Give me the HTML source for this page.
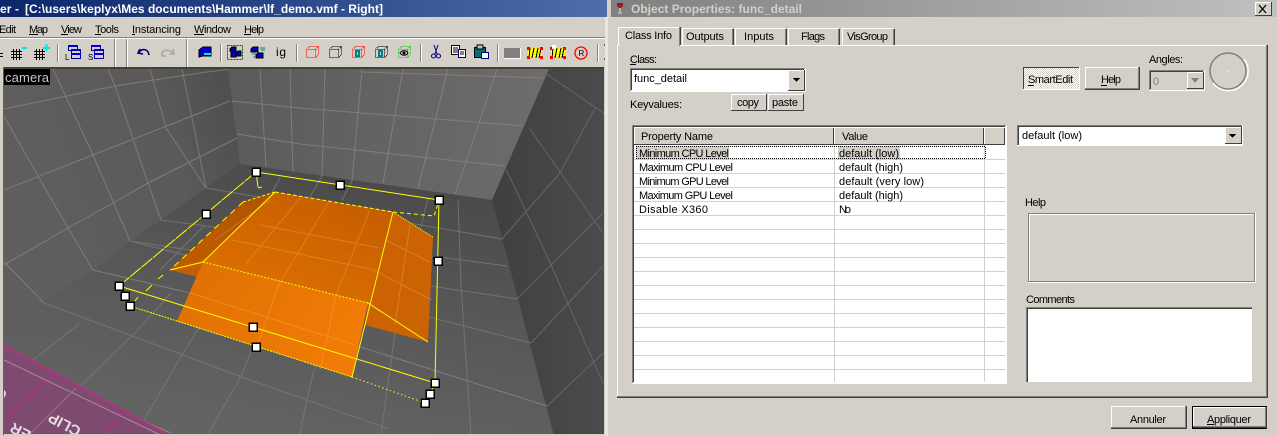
<!DOCTYPE html>
<html><head><meta charset="utf-8"><style>
html,body{margin:0;padding:0;background:#d4d0c8;width:1277px;height:436px;overflow:hidden}
svg{display:block}
text{font-family:"Liberation Sans",sans-serif;font-size:11px;fill:#000}
.ui{shape-rendering:crispEdges}
.w{stroke:#fff;fill:none}.k{stroke:#404040;fill:none}.g{stroke:#808080;fill:none}.b{stroke:#000;fill:none}
.y{stroke:#ff0;fill:none;stroke-width:1}
.h{fill:#fff;stroke:#000;stroke-width:1.5}
.lw{stroke:#8a8a88;fill:none;stroke-width:1;opacity:.7}
.ld{stroke:#7c7c7c;fill:none;stroke-width:1;opacity:.75}
.lr{stroke:#6c6c6c;fill:none;stroke-width:1;opacity:.85}
.lo{stroke:#ffc070;fill:none;stroke-width:1;opacity:.28}
</style></head><body>
<svg width="1277" height="436" viewBox="0 0 1277 436" xmlns="http://www.w3.org/2000/svg">
<defs>
<linearGradient id="t1" x1="0" x2="1" y1="0" y2="0"><stop offset="0" stop-color="#0b266b"/><stop offset="1" stop-color="#4d6ea9"/></linearGradient>
<linearGradient id="t2" x1="0" x2="1" y1="0" y2="0"><stop offset="0" stop-color="#808080"/><stop offset="1" stop-color="#c0c0c0"/></linearGradient>
<linearGradient id="lw" gradientUnits="userSpaceOnUse" x1="0" y1="200" x2="240" y2="120"><stop offset="0" stop-color="#605f5d"/><stop offset=".7" stop-color="#5b5a58"/><stop offset="1" stop-color="#4f4f4e"/></linearGradient>
<linearGradient id="bw" gradientUnits="userSpaceOnUse" x1="230" y1="120" x2="540" y2="120"><stop offset="0" stop-color="#5b5b59"/><stop offset="1" stop-color="#6d6c6a"/></linearGradient>
<linearGradient id="fl" gradientUnits="userSpaceOnUse" x1="330" y1="170" x2="280" y2="434"><stop offset="0" stop-color="#4a4a4a"/><stop offset=".4" stop-color="#565656"/><stop offset="1" stop-color="#636363"/></linearGradient>
<linearGradient id="rw" gradientUnits="userSpaceOnUse" x1="500" y1="300" x2="604" y2="300"><stop offset="0" stop-color="#404040"/><stop offset="1" stop-color="#4b4b4b"/></linearGradient>
<linearGradient id="ot" gradientUnits="userSpaceOnUse" x1="330" y1="195" x2="290" y2="300"><stop offset="0" stop-color="#c65f00"/><stop offset="1" stop-color="#dc6e02"/></linearGradient>
<linearGradient id="of" gradientUnits="userSpaceOnUse" x1="200" y1="280" x2="330" y2="370"><stop offset="0" stop-color="#e17203"/><stop offset="1" stop-color="#f17b06"/></linearGradient>
<linearGradient id="ol" gradientUnits="userSpaceOnUse" x1="260" y1="195" x2="190" y2="270"><stop offset="0" stop-color="#b05400"/><stop offset="1" stop-color="#c05c00"/></linearGradient>
<clipPath id="vp"><rect x="4" y="69" width="600" height="365"/></clipPath>
<clipPath id="pk"><polygon points="3,345 171,436 3,436"/></clipPath>
<pattern id="dith" width="2" height="2" patternUnits="userSpaceOnUse"><rect width="2" height="2" fill="#fff"/><rect width="1" height="1" fill="#d4d0c8"/><rect x="1" y="1" width="1" height="1" fill="#d4d0c8"/></pattern>
<pattern id="dot" width="2" height="2" patternUnits="userSpaceOnUse"><rect width="1" height="1" fill="#000"/><rect x="1" y="1" width="1" height="1" fill="#000"/></pattern>
</defs>

<rect width="1277" height="436" fill="#d4d0c8"/>

<!-- left titlebar -->
<rect class="ui" x="0" y="0" width="607" height="17" fill="url(#t1)"/>
<text x="0" y="13" textLength="19" style="font-weight:bold;font-size:12px;fill:#fff">er -</text>
<text x="25" y="13" textLength="358" style="font-weight:bold;font-size:12px;fill:#fff">[C:\users\keplyx\Mes documents\Hammer\lf_demo.vmf - Right]</text>

<!-- menu -->
<g>
<text x="-1" y="33" textLength="17">Edit</text>
<text x="29" y="33" textLength="19">Map</text>
<text x="61" y="33" textLength="21">View</text>
<text x="95" y="33" textLength="24">Tools</text>
<text x="132" y="33" textLength="49">Instancing</text>
<text x="194" y="33" textLength="37">Window</text>
<text x="244" y="33" textLength="20">Help</text>
</g>
<g class="ui" fill="#000">
<rect x="29" y="34" width="9" height="1"/><rect x="61" y="34" width="7" height="1"/><rect x="95" y="34" width="6" height="1"/><rect x="132" y="34" width="3" height="1"/><rect x="194" y="34" width="10" height="1"/><rect x="244" y="34" width="7" height="1"/>
</g>
<rect class="ui" x="0" y="37" width="607" height="1" fill="#808080"/>
<rect class="ui" x="0" y="38" width="607" height="1" fill="#fff"/>

<!-- toolbar -->
<g class="ui" fill="#808080">
<rect x="57" y="44" width="1" height="18"/><rect x="114" y="39" width="1" height="28"/><rect x="126" y="39" width="1" height="28"/>
<rect x="186" y="39" width="1" height="28"/><rect x="220" y="44" width="1" height="18"/><rect x="296" y="44" width="1" height="18"/>
<rect x="420" y="44" width="1" height="18"/><rect x="497" y="44" width="1" height="18"/><rect x="597" y="44" width="1" height="18"/>
</g>
<g class="ui" fill="#fff">
<rect x="58" y="44" width="1" height="18"/><rect x="115" y="39" width="1" height="28"/><rect x="127" y="39" width="1" height="28"/>
<rect x="187" y="39" width="1" height="28"/><rect x="221" y="44" width="1" height="18"/><rect x="297" y="44" width="1" height="18"/>
<rect x="421" y="44" width="1" height="18"/><rect x="498" y="44" width="1" height="18"/><rect x="598" y="44" width="1" height="18"/>
</g>
<g class="ui">
<path d="M0 53.500h3M0 56.500h3" stroke="#000"/>
<path d="M13.500 49v11M16.500 49v11M19.500 49v11M11 51.500h11M11 54.500h11M11 57.500h11M36.500 49v11M39.500 49v11M42.500 49v11M34 51.500h11M34 54.500h11M34 57.500h11" stroke="#000" fill="none"/>
<rect x="22" y="47" width="5" height="2" fill="#00e6e6"/>
<path d="M43 47h7v2h-7zM45.500 44h2v7h-2z" fill="#00e6e6"/>
<g fill="#d4d0c8" stroke="#0000a0">
<rect x="68.500" y="45.500" width="9" height="5"/><rect x="71.500" y="49.500" width="9" height="5"/><rect x="71.500" y="53.500" width="9" height="5"/>
<rect x="91.500" y="45.500" width="9" height="5"/><rect x="94.500" y="49.500" width="9" height="5"/><rect x="94.500" y="53.500" width="9" height="5"/>
</g>
<g fill="#0000c8">
<rect x="68" y="45" width="10" height="2"/><rect x="71" y="49" width="10" height="2"/><rect x="71" y="53" width="10" height="2"/>
<rect x="91" y="45" width="10" height="2"/><rect x="94" y="49" width="10" height="2"/><rect x="94" y="53" width="10" height="2"/>
</g>
</g>
<text x="65" y="60" style="font-size:8px">L</text><text x="88" y="60" style="font-size:8px">S</text>
<path d="M140 49l-2 4 5 1M139 52c4-4 9-3 10 3" fill="none" stroke="#000080" stroke-width="1.600"/>
<path d="M173 49l1 5-5 0M173 53c-3-3-9-4-11 0v3h4" fill="none" stroke="#a8a8a4" stroke-width="1.600"/>
<g class="ui">
<path d="M199 50l4-3h8v9h-8l-4 1z" fill="#0000c0" stroke="#000"/><rect x="204" y="53" width="7" height="2" fill="#00e6e6"/>
<rect x="227.500" y="45.500" width="15" height="14" fill="none" stroke="#006400" stroke-dasharray="2 1"/>
<path d="M230 49l2-2h4v4h-6zM236 53l2-2h3v5h-5zM231 52h5v5h-5z" fill="#0000c0" stroke="#000"/>
<path d="M251 49l2-2h5v5h-7zM256 55l2-2h5v5h-7z" fill="#0000c0" stroke="#000"/>
<path d="M260 48h5M261 50h4M252 54h4M253 57h3" stroke="#008080"/>
</g>
<text x="276" y="56" textLength="10" style="font-size:12px">ig</text>
<g fill="none" stroke-dasharray="1 1" class="ui">
<path d="M306.500 49.500h9v8h-9zM306.500 49.500l3-3h9v8l-3 3M315.500 49.500l3-3" stroke="#f00"/>
<path d="M329.500 49.500h9v8h-9zM329.500 49.500l3-3h9v8l-3 3M338.500 49.500l3-3" stroke="#000"/>
<path d="M352.500 49.500h9v8h-9zM352.500 49.500l3-3h9v8l-3 3M361.500 49.500l3-3" stroke="#f00"/>
<path d="M375.500 49.500h9v8h-9zM375.500 49.500l3-3h9v8l-3 3M384.500 49.500l3-3" stroke="#000"/>
<path d="M398.500 49.500h9v8h-9zM398.500 49.500l3-3h9v8l-3 3M407.500 49.500l3-3" stroke="#0c0"/>
</g>
<rect class="ui" x="356" y="51" width="3" height="5" fill="none" stroke="#008080" stroke-width="2"/>
<rect class="ui" x="379" y="51" width="3" height="5" fill="none" stroke="#008080" stroke-width="2"/>
<path d="M400 53c2-3 7-3 8 0c-2 3-6 3-8 0z" fill="none" stroke="#000"/><circle cx="404" cy="53" r="1.500" fill="#000"/>
<path d="M434 45l3 9M438 45l-3 9" stroke="#000080" fill="none"/>
<circle cx="433.500" cy="56" r="2" fill="none" stroke="#000080"/><circle cx="438.500" cy="56" r="2" fill="none" stroke="#000080"/>
<g class="ui">
<rect x="451.500" y="45.500" width="8" height="9" fill="#fff" stroke="#000"/>
<rect x="458.500" y="49.500" width="7" height="8" fill="#fff" stroke="#000080"/>
<path d="M453 48h5M453 50h5M453 52h5M460 52h4M460 54h4" stroke="#000"/>
<rect x="474.500" y="47.500" width="11" height="10" fill="#007070" stroke="#000"/>
<rect x="477" y="45" width="6" height="4" fill="#c0c0c0" stroke="#000"/>
<rect x="481.500" y="52.500" width="7" height="6" fill="#fff" stroke="#000080"/>
<rect x="504" y="48" width="16" height="10" fill="#808080"/><path d="M504 58.500h17M520.500 48v11" stroke="#fff"/>
<rect x="528" y="48" width="14" height="10" fill="#ffff00"/>
<path d="M530 48l-1 10M534 48l-2 10M538 48l-2 10M541 48l-2 10" stroke="#000"/>
<rect x="527" y="47" width="3" height="3" fill="#f00"/><rect x="540" y="47" width="3" height="3" fill="#f00"/><rect x="527" y="56" width="3" height="3" fill="#f00"/><rect x="540" y="56" width="3" height="3" fill="#f00"/>
<rect x="551" y="48" width="14" height="10" fill="#ffff00"/>
<path d="M553 48l-1 10M557 48l-2 10M561 48l-2 10M564 48l-2 10" stroke="#000"/>
<rect x="550" y="47" width="3" height="3" fill="#f00"/><rect x="563" y="47" width="3" height="3" fill="#f00"/><rect x="550" y="56" width="3" height="3" fill="#f00"/><rect x="563" y="56" width="3" height="3" fill="#f00"/>
<rect x="552" y="45" width="4" height="4" fill="#fff"/>
</g>
<circle cx="581" cy="53" r="6" fill="none" stroke="#f00" stroke-width="1.300"/>
<text x="578.500" y="56" style="font-size:8px">R</text>
<path class="ui" d="M605.500 45v14M604 45h3M604 59h3" stroke="#000" fill="none" stroke-width="1"/>

<!-- viewport border -->
<rect class="ui" x="3" y="67" width="602" height="2" fill="#404040"/>
<rect class="ui" x="3" y="67" width="1" height="368" fill="#606060"/>

<!-- 3D scene -->
<g clip-path="url(#vp)">
<rect x="0" y="69" width="610" height="370" fill="#555"/>
<polygon points="3,69 228,69 240,164 206,188 161,220 130,241 93,270 44,303 3,333" fill="url(#lw)"/>
<polygon points="228,69 549,69 492,200 240,164" fill="url(#bw)"/>
<polygon points="240,164 492,200 554,436 3,436 3,333 44,303 93,270 130,241 161,220" fill="url(#fl)"/>
<polygon points="549,69 610,69 610,436 554,436 492,200" fill="url(#rw)"/>

<g class="lw">
<path d="M4 109L115 86L200 73L230 69"/>
<path d="M4 190L93 155L230 101"/>
<path d="M4 265L68 228L113 203L148 183L237 138"/>
<path d="M53 69L93 155L130 241"/>
<path d="M108 69L115 86L148 183L161 220"/>
<path d="M150 69L166 128L206 188"/>
<path d="M182 69L192 118L206 188"/>
<path d="M4 116L38 176L68 228L93 270"/>
<path d="M4 262L44 303"/>
</g>
<g class="lw">
<path d="M232 101L300 108L523 126"/><path d="M237 134L300 144L505 166"/><path d="M362 72L545 78"/>
<path d="M260 69L266 167"/><path d="M290 69L293 172"/><path d="M325 69L322 176"/><path d="M362 69L352 181"/><path d="M403 69L383 183"/><path d="M448 69L418 189"/><path d="M497 69L455 194"/>
</g>
<g class="lr">
<path d="M545 73L605 114"/>
<path d="M502 239L560 173L595 108"/>
<path d="M517 299L603 213"/>
<path d="M531 343L603 266"/>
<path d="M547 406L603 353"/>
<path d="M506 169L547 256L603 383"/>
<path d="M530 129L603 233"/>
</g>
<g class="ld">
<path d="M206 188L502 239"/>
<path d="M161 220L507 266"/>
<path d="M130 241L517 299"/>
<path d="M130 241L531 343"/>
<path d="M93 270L190 293L547 406" style="stroke:#8a8a8a"/>
<path d="M44 303L239 376L389 429"/>
<path d="M4 361L171 433" style="stroke:#a08a98"/>
<path d="M458 200L461 286L471 434"/>
<path d="M428 198L395 333L381 434"/>
<path d="M331 299L307 399L300 434"/>
<path d="M278 286L241 376L208 434"/>
<path d="M202 323L183 353L136 434"/>
<path d="M171 293L132 336L80 386L47 434"/>
<path d="M93 270L4 383" style="opacity:0"/>
<path d="M80 323L4 383"/>
<path d="M280 178L272 192"/><path d="M322 176L310 197"/><path d="M352 181L342 200"/>
<path d="M205 225L160 270"/>
</g>

<!-- pink -->
<polygon points="3,345 171,436 3,436" fill="#7e4a70"/>
<path d="M3 345L171 436" stroke="#c32a88" stroke-width="1.500" fill="none"/>
<g clip-path="url(#pk)">
<path d="M4 420L55 374M105 434L124 411" stroke="#c42a88" stroke-width="1" fill="none"/>
<path d="M4 360L171 440" stroke="#a98a9e" stroke-width="1" fill="none"/>
<path d="M76 388L30 434" stroke="#8e7888" fill="none"/>
<text transform="translate(82 428) rotate(208)" style="font-size:15px;font-weight:bold;fill:#e8dce4">CLIP</text>
<text transform="translate(32 432) rotate(208)" style="font-size:15px;font-weight:bold;fill:#e8dce4">ER</text>
<text transform="translate(8 392) rotate(208)" style="font-size:15px;font-weight:bold;fill:#e8dce4">C</text>
</g>

<!-- orange -->
<polygon points="170,270 203,262 198,277" fill="#c45e00"/>
<polygon points="393,212 433,237 428,342 365,325 368,303" fill="#cc6302"/>
<polygon points="275,192 243,202 170,270 203,262" fill="url(#ol)"/>
<polygon points="275,192 393,212 368,303 203,262" fill="url(#ot)"/>
<polygon points="203,262 368,303 352,377 177,321" fill="url(#of)"/>
<g class="lo">
<path d="M260 225L380 248"/><path d="M232 240L375 270"/><path d="M330 200L278 286L257 347"/><path d="M370 210L336 295L320 370"/>
<path d="M300 198L245 265"/><path d="M190 293L355 345" style="opacity:1.400"/><path d="M385 240L430 262"/><path d="M373 270L432 300"/><path d="M410 225L395 325"/><path d="M215 240L270 200"/>
</g>

<!-- yellow lines -->
<g class="y">
<path d="M256 172L439 200"/>
<path d="M119 286L435 383" />
<path d="M439 200L435 383"/>
<path d="M393 212L352 377"/>
<path d="M275 192L203 262L170 270"/>
<path d="M368 303L428 342"/>
<path d="M256 172L119 286" stroke-dasharray="14 1"/>
<path d="M256 172L258 187"/>
<path d="M258 188L262 187M275 192L393 212" stroke-dasharray="4 2"/>
<path d="M243 202L275 192" stroke-dasharray="3 2"/>
<path d="M393 212L434 216L439 200" stroke-dasharray="4 3"/>
<path d="M243 202L170 270" stroke-dasharray="6 5"/>
<path d="M203 262L368 303" stroke-dasharray="2 1.500"/>
<path d="M393 212L433 237" stroke-dasharray="1 1"/>
<path d="M130 306L177 321L352 377" stroke-dasharray="2 1"/>
<path d="M352 377L425 403" stroke-dasharray="1.500 2.500"/>
<path d="M163 275L158 279M152 285L146 291M138 297L135 301"/>
<path d="M435 383L430 394"/>
</g>

<g class="h ui">
<rect x="252" y="168" width="8" height="8"/><rect x="336" y="181" width="8" height="8"/><rect x="435" y="196" width="8" height="8"/>
<rect x="202" y="210" width="8" height="8"/><rect x="434" y="257" width="8" height="8"/>
<rect x="115" y="282" width="8" height="8"/><rect x="121" y="292" width="8" height="8"/><rect x="126" y="302" width="8" height="8"/>
<rect x="249" y="323" width="8" height="8"/><rect x="252" y="343" width="8" height="8"/>
<rect x="431" y="379" width="8" height="8"/><rect x="426" y="390" width="8" height="8"/><rect x="421" y="399" width="8" height="8"/>
</g>
</g>

<rect class="ui" x="4" y="69" width="46" height="16" fill="#000"/>
<text x="5" y="82" textLength="44" style="font-size:13px;fill:#c8c8c8">camera</text>

<rect class="ui" x="604" y="67" width="1" height="369" fill="#d4d0c8"/>
<rect class="ui" x="605" y="17" width="3" height="419" fill="#e8e6e0"/>
<rect class="ui" x="0" y="435" width="605" height="1" fill="#d4d0c8"/>

<!-- dialog title -->
<rect class="ui" x="611" y="0" width="666" height="17" fill="url(#t2)"/>
<path d="M617 3h6v3l-2 2h-2l-2-2z" fill="#a01818"/><path d="M620 8v4M618 13h4" stroke="#e0e0e0" fill="none"/>
<text x="631" y="13" textLength="171" style="font-weight:bold;font-size:12px;fill:#d4d0c8">Object Properties: func_detail</text>
<g class="ui">
<rect x="1255" y="2" width="16" height="14" fill="#d4d0c8"/>
<path d="M1255.500 15V2.500H1271" class="w"/><path d="M1255 15.500h16.500V2" class="k"/>
</g>
<path d="M1259 5l7 8M1266 5l-7 8" stroke="#000" stroke-width="1.300" fill="none"/>

<!-- tab pane -->
<g class="ui">
<path d="M617.500 397V45.500H1266" class="w"/>
<path d="M617 396.500h649.500V45" class="g"/>
<path d="M617 397.500h650.500V45" class="k"/>
<rect x="618" y="26" width="62" height="20" fill="#d4d0c8"/>
<path d="M618.500 46V27.500H679" class="w"/><path d="M679.500 27V46" class="g"/><path d="M680.500 27V45" class="k"/>
<path d="M682.500 45V28.500H732" class="w"/><path d="M732.500 29V45" class="g"/><path d="M733.500 29V45" class="k"/>
<path d="M735.500 45V28.500H785" class="w"/><path d="M785.500 29V45" class="g"/><path d="M786.500 29V45" class="k"/>
<path d="M788.500 45V28.500H838" class="w"/><path d="M838.500 29V45" class="g"/><path d="M839.500 29V45" class="k"/>
<path d="M842.500 45V28.500H893" class="w"/><path d="M893.500 29V45" class="g"/><path d="M894.500 29V45" class="k"/>
</g>
<text x="625" y="39" textLength="47">Class Info</text>
<text x="686" y="40" textLength="38">Outputs</text>
<text x="744" y="40" textLength="30">Inputs</text>
<text x="801" y="40" textLength="24">Flags</text>
<text x="847" y="40" textLength="41">VisGroup</text>

<text x="630" y="63" textLength="27">Class:</text>
<rect class="ui" x="630" y="64" width="6" height="1" fill="#000"/>

<g class="ui">
<rect x="630" y="68" width="175" height="23" fill="#fff"/>
<path d="M630.500 91V68.500H805" class="g"/><path d="M631.500 90V69.500H804" class="k"/>
<path d="M630 91.500h175.500V68" class="w"/>
<rect x="788" y="70" width="16" height="20" fill="#d4d0c8"/>
<path d="M788.500 90V70.500H804" class="w"/><path d="M788 90.500h16.500V70" class="k"/>
<path d="M793 78h7l-3.500 4z" fill="#000"/>
</g>
<text x="634" y="82" textLength="53">func_detail</text>
<text x="630" y="108" textLength="52">Keyvalues:</text>

<g class="ui">
<path d="M731.500 110V94.500H767" class="w"/><path d="M731 110.500h35.500V94" class="k"/>
<path d="M768.500 110V94.500H804" class="w"/><path d="M768 110.500h35.500V94" class="k"/>
</g>
<text x="737" y="106" textLength="22">copy</text>
<text x="772" y="106" textLength="26">paste</text>

<!-- list -->
<g class="ui">
<rect x="632" y="125" width="374" height="258" fill="#fff"/>
<path d="M632.500 383V125.500H1006" class="g"/><path d="M633.500 382V126.500H1005" class="k"/>
<path d="M632 383.500h374.500V125" class="w"/>
<rect x="634" y="127" width="371" height="18" fill="#d4d0c8"/>
<path d="M634 144.500h371" class="k"/>
<path d="M833.500 127v17M983.500 127v17M1004.500 127v17" class="k"/>
<path d="M834.500 127v17M984.500 127v17M634.500 127v17M634 127.500h371" class="w"/>
<path d="M634 159.500h371M634 173.500h371M634 187.500h371M634 201.500h371M634 215.500h371M634 229.500h371M634 243.500h371M634 257.500h371M634 271.500h371M634 285.500h371M634 299.500h371M634 313.500h371M634 327.500h371M634 341.500h371M634 355.500h371M634 369.500h371M834.500 145v237M984.500 145v237" stroke="#d4d0c8" fill="none"/>
<rect x="636" y="146" width="93" height="13" fill="#d4d0c8"/>
<rect x="838" y="146" width="62" height="13" fill="#d4d0c8"/>
<rect x="636" y="146" width="350" height="1" fill="url(#dot)"/>
<rect x="636" y="158" width="350" height="1" fill="url(#dot)"/>
<rect x="636" y="146" width="1" height="13" fill="url(#dot)"/>
<rect x="985" y="146" width="1" height="13" fill="url(#dot)"/>
</g>
<text x="641" y="140" textLength="72">Property Name</text>
<text x="842" y="140" textLength="26">Value</text>
<text x="639" y="157" textLength="90">Minimum CPU Level</text>
<text x="639" y="171" textLength="94">Maximum CPU Level</text>
<text x="639" y="185" textLength="90">Minimum GPU Level</text>
<text x="639" y="199" textLength="94">Maximum GPU Level</text>
<text x="639" y="213" textLength="69">Disable X360</text>
<text x="839" y="157" textLength="60">default (low)</text>
<text x="839" y="171" textLength="64">default (high)</text>
<text x="839" y="185" textLength="85">default (very low)</text>
<text x="839" y="199" textLength="64">default (high)</text>
<text x="839" y="213" textLength="12">No</text>

<g class="ui">
<rect x="1023" y="67" width="57" height="23" fill="url(#dith)"/>
<path d="M1023.500 89V67.500H1079" class="k"/><path d="M1023 89.500h56.500V67" class="w"/>
<path d="M1085.500 89V67.500H1139" class="w"/><path d="M1085 88.500h53.500V67" class="g"/><path d="M1085 89.500h54.500V67" class="k"/>
<rect x="1028" y="85" width="6" height="1" fill="#000"/><rect x="1101" y="85" width="6" height="1" fill="#000"/>
</g>
<text x="1028" y="83" textLength="45">SmartEdit</text>
<text x="1101" y="83" textLength="20">Help</text>
<text x="1149" y="63" textLength="34">Angles:</text>

<g class="ui">
<path d="M1149.500 90V70.500H1204" class="g"/><path d="M1150.500 89V71.500H1203" class="k"/>
<path d="M1149 90.500h55.500V70" class="w"/>
<rect x="1187" y="72" width="16" height="17" fill="#d4d0c8"/>
<path d="M1187.500 89V72.500H1203" class="w"/><path d="M1187 88.500h16.500V72" class="k"/>
<path d="M1191 78h8l-4 5z" fill="#808080"/>
</g>
<text x="1153" y="85" style="fill:#808080">0</text>
<circle cx="1228" cy="71" r="18" fill="none" stroke="#808080" stroke-width="1.500"/>
<path d="M1244 59A18 18 0 0 1 1213 83" fill="none" stroke="#fff" stroke-width="1.500"/>
<rect class="ui" x="1228" y="71" width="1" height="1" fill="#fff"/>

<g class="ui">
<rect x="1017" y="125" width="226" height="21" fill="#fff"/>
<path d="M1017.500 146V125.500H1243" class="g"/><path d="M1018.500 145V126.500H1242" class="k"/>
<path d="M1017 145.500h225.500V125" class="w"/>
<rect x="1225" y="127" width="16" height="17" fill="#d4d0c8"/>
<path d="M1225.500 144V127.500H1241" class="w"/><path d="M1225 143.500h16.500V127" class="k"/>
<path d="M1229 134h7l-3.500 4z" fill="#000"/>
</g>
<text x="1022" y="139" textLength="60">default (low)</text>

<text x="1025" y="206" textLength="21">Help</text>
<g class="ui">
<path d="M1028.500 282V213.500H1254" class="g"/><path d="M1029.500 281V214.500H1254" class="w"/>
<path d="M1028 281.500h226.500V213" class="g"/><path d="M1028 282.500h227.500V213" class="w"/>
</g>
<text x="1026" y="303" textLength="49">Comments</text>
<g class="ui">
<rect x="1026" y="307" width="227" height="76" fill="#fff"/>
<path d="M1026.500 383V307.500H1253" class="g"/><path d="M1027.500 382V308.500H1252" class="k"/>
<path d="M1026 382.500h226.500V307" stroke="#d4d0c8" fill="none"/>
</g>

<g class="ui">
<path d="M1111.500 428V406.500H1185" class="w"/><path d="M1111 427.500h74.500V406" class="g"/><path d="M1111 428.500h75.500V406" class="k"/>
<rect x="1192.500" y="406.500" width="74" height="22" fill="none" stroke="#000"/>
<path d="M1193.500 427V407.500H1265" class="w"/><path d="M1193 426.500h72.500V407" class="g"/><path d="M1193 427.500h73.500V407" class="k"/>
<rect x="1207" y="424" width="7" height="1" fill="#000"/>
</g>
<text x="1130" y="423" textLength="36">Annuler</text>
<text x="1207" y="423" textLength="44">Appliquer</text>
</svg>
</body></html>
